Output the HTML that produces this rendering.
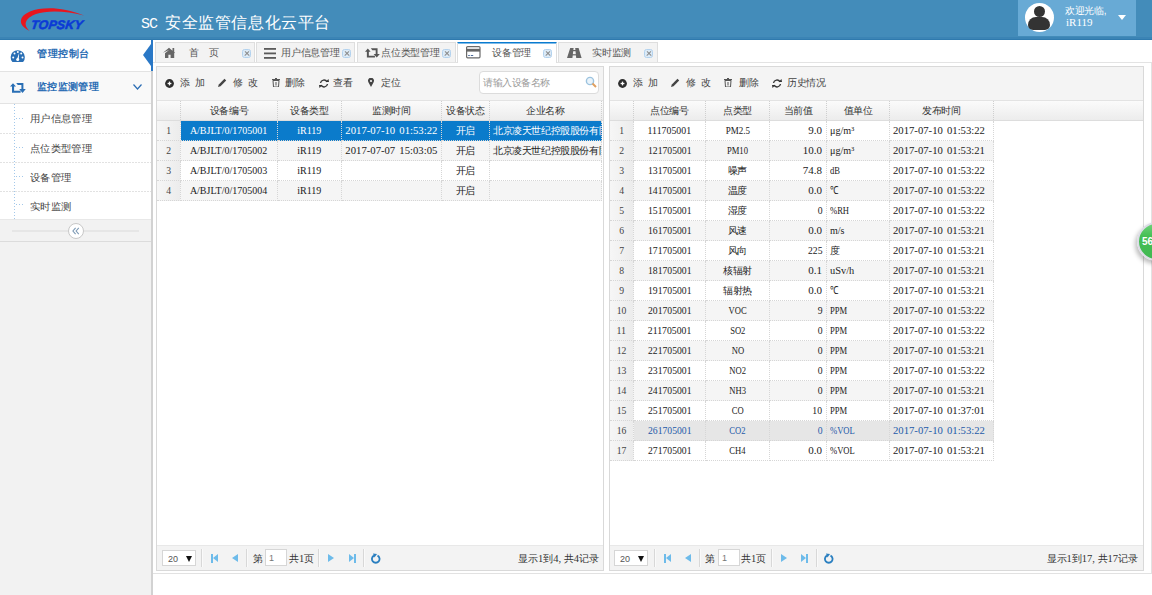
<!DOCTYPE html><html><head><meta charset="utf-8"><style>
*{margin:0;padding:0;box-sizing:border-box}
html,body{width:1152px;height:595px;overflow:hidden;background:#fff;font-family:"Liberation Sans",sans-serif;font-size:10px;color:#333}
.a{position:absolute}
.nw{white-space:nowrap}
#hdr{position:absolute;left:0;top:0;width:1152px;height:40px;background:#438cba;border-bottom:1px solid #2f7aae;box-shadow:inset 0 -2px #3b84b5}
#title{position:absolute;left:141px;top:13px;color:#fff;font-size:16px;line-height:20px;white-space:nowrap}
#user{position:absolute;left:1018px;top:0;width:118px;height:36px;background:#68aad5}
.sub{position:absolute;left:0;width:151px;height:29px;background:#fff linear-gradient(90deg,#e2e2e2 2px,transparent 2px) 0 100%/3px 1px repeat-x}
.sub span{position:absolute;left:30px;top:9px;font-size:10px;transform:scaleX(1.035);transform-origin:0 0;color:#444;line-height:12px;white-space:nowrap}
.tab{position:absolute;top:42px;height:20px;background:#f3f3f3;border:1px solid #dedede;border-bottom:none}
.tab .t{position:absolute;top:4px;font-size:10px;letter-spacing:-0.25px;line-height:12px;color:#555;white-space:nowrap}
.cls{position:absolute;top:6px;width:9px;height:9px;border-radius:2.5px;background:#dcebf8;border:1px solid #b3d2ee}
.cls:before,.cls:after{content:"";position:absolute;left:0.5px;top:3px;width:6px;height:1.4px;background:#8c8c8c;transform:rotate(45deg)}
.cls:after{transform:rotate(-45deg)}
.panel{position:absolute;top:66px;height:505px;border:1px solid #d9d9d9;background:#fff;overflow:hidden}
.tb{position:absolute;left:0;top:0;right:0;height:34px;background:#f4f4f4;border-bottom:1px solid #e3e3e3}
.tbt{position:absolute;top:9.5px;font-size:10px;line-height:12px;color:#444;white-space:nowrap}
.hd{position:absolute;top:34px;height:20px;background:linear-gradient(#fbfbfb,#ececec);border-bottom:1px solid #dddddd}
.hc{position:absolute;top:0;height:19px;line-height:19px;text-align:center;font-size:10px;letter-spacing:-0.45px;color:#333;white-space:nowrap;border-right:1px dotted #cfcfcf}
.rw{position:absolute;height:20px}
.cc{position:absolute;top:0;height:20px;line-height:19px;white-space:nowrap;overflow:hidden;border-right:1px dotted #d6d6d6;border-bottom:1px dotted #d6d6d6;text-align:center}
.rn{background:linear-gradient(90deg,#f6f6f6,#ececec);color:#333}
.n{font-family:"Liberation Serif",serif;font-size:11px;color:#444}
.s{display:inline-block;word-spacing:1.5px}
.z{font-size:10px;letter-spacing:-0.4px;color:#2a2a2a}
.pg{position:absolute;left:0;right:0;top:478px;height:26px;background:#f3f3f3;border-top:1px solid #e8e8e8}
.sep{position:absolute;top:3px;width:2px;height:18px;border-left:1px solid #d8d8d8;border-right:1px solid #fafafa}
.pt{position:absolute;top:7px;font-size:10px;line-height:12px;color:#333;white-space:nowrap}
.pt i{font-style:normal;font-family:"Liberation Serif",serif;font-size:10.5px}
</style></head><body><div id="hdr">
  <svg class="a" style="left:0;top:0" width="100" height="40" viewBox="0 0 100 40">
    <path d="M29.8 31 C 17 25, 19 16, 30 11.5 C 42 7, 62 6.5, 84 15.5 C 66 10.5, 46 10.5, 36 14 C 26 18, 22 24, 29.8 31 Z" fill="#e8161e"/>
    <text x="30.5" y="28.7" font-family="Liberation Sans" font-weight="bold" font-style="italic" font-size="12.4" fill="#0b3ad6" stroke="#0b3ad6" stroke-width="0.55" letter-spacing="0.2" transform="translate(30.5 28.7) skewX(-8) translate(-30.5 -28.7)">TOPSKY</text>
  </svg>
  <div id="title"><span style="font-family:'Liberation Mono',monospace;font-size:15px;letter-spacing:-1px">SC </span><span style="letter-spacing:0.6px">安全监管信息化云平台</span></div>
  <div id="user">
    <div class="a" style="left:7px;top:3px;width:29px;height:29px;border-radius:50%;background:#fff"></div>
    <div class="a" style="left:16px;top:6px;width:11px;height:11px;border-radius:50%;background:#333"></div>
    <div class="a" style="left:10px;top:17px;width:22px;height:13px;border-radius:11px 11px 7px 7px;background:#333"></div>
    <div class="a nw" style="left:47px;top:5px;color:#fff;font-size:10px;letter-spacing:-0.3px;line-height:11px">欢迎光临,</div>
    <div class="a nw" style="left:48px;top:17px;color:#fff;font-size:11px;line-height:11px;font-family:'Liberation Serif',serif">iR119</div>
    <div class="a" style="left:100px;top:15px;width:0;height:0;border-left:4px solid transparent;border-right:4px solid transparent;border-top:5px solid #fff"></div>
  </div>
</div>
<div class="a" style="left:0;top:40px;width:151px;height:555px;background:#f2f2f2">
  <div class="a" style="left:0;top:0;width:151px;height:32px;background:#fff;border-bottom:1px solid #e3e3e3">
    <svg class="a" style="left:6px;top:0" width="24" height="30" viewBox="6 40 24 30"><path d="M12.4 61.9 A7.1 7.1 0 1 1 23.1 61.9 Z" fill="#2a6fb5"/><circle cx="13.2" cy="57.6" r="1" fill="#fff"/><circle cx="14.5" cy="53.6" r="1" fill="#fff"/><circle cx="17.8" cy="52.1" r="1" fill="#fff"/><circle cx="21.2" cy="53.6" r="1" fill="#fff"/><circle cx="22.5" cy="57.6" r="1" fill="#fff"/><path d="M16.9 59.6 L19.2 52.8 L18.7 59.9 Z" fill="#fff"/><circle cx="17.7" cy="59.6" r="1.5" fill="#fff"/></svg>
    <div class="a nw" style="left:37px;top:8px;font-size:10px;letter-spacing:0.5px;line-height:12px;font-weight:bold;color:#2b6db4">管理控制台</div>
  </div>
  <div class="a" style="left:0;top:32px;width:151px;height:32px;background:#f9f9f9;border-bottom:1px solid #e3e3e3">
    <svg class="a" style="left:6px;top:0" width="24" height="30" viewBox="6 72 24 30"><path d="M10 86.6 L13 83.2 L16 86.6 L14.1 86.6 L14.1 90.8 L20.6 90.8 L20.6 92.8 L12 92.8 L12 86.6 Z M16.2 83 L23.4 83 L23.4 89 L25.8 89 L22.5 92.9 L19.2 89 L21.4 89 L21.4 85 L17.8 85 Z" fill="#2a6fb5"/></svg>
    <div class="a nw" style="left:37px;top:9px;font-size:10px;letter-spacing:0.35px;line-height:12px;font-weight:bold;color:#2b6db4">监控监测管理</div>
    <svg class="a" style="left:133px;top:12px" width="9" height="6" viewBox="0 0 9 6"><path d="M0.5 0.5 L4.5 5 L8.5 0.5" stroke="#2b6db4" stroke-width="1.2" fill="none"/></svg>
  </div>
  <div class="sub" style="top:64px;height:30px"><span>用户信息管理</span></div>
  <div class="sub" style="top:94px"><span>点位类型管理</span></div>
  <div class="sub" style="top:123px"><span>设备管理</span></div>
  <div class="sub" style="top:152px;height:27px;background:#fff"><span>实时监测</span></div>
  <div class="a" style="left:14px;top:64px;width:1px;height:115px;background:repeating-linear-gradient(#a3c8ea 0 1px,transparent 1px 3px)"></div>
  <div class="a" style="left:16px;top:78px;width:7px;height:1px;background:repeating-linear-gradient(90deg,#a3c8ea 0 1px,transparent 1px 3px)"></div>
  <div class="a" style="left:16px;top:107px;width:7px;height:1px;background:repeating-linear-gradient(90deg,#a3c8ea 0 1px,transparent 1px 3px)"></div>
  <div class="a" style="left:16px;top:136px;width:7px;height:1px;background:repeating-linear-gradient(90deg,#a3c8ea 0 1px,transparent 1px 3px)"></div>
  <div class="a" style="left:16px;top:164px;width:7px;height:1px;background:repeating-linear-gradient(90deg,#a3c8ea 0 1px,transparent 1px 3px)"></div>
  <div class="a" style="left:0;top:179px;width:151px;height:23px;background:#f2f2f2;border-top:1px solid #e8e8e8;border-bottom:1px solid #dcdcdc"></div>
  <div class="a" style="left:12px;top:190px;width:127px;height:2px;background:#e6e6e6"></div>
  <div class="a" style="left:68px;top:183px;width:16px;height:16px;border-radius:50%;background:#fff;border:1px solid #c8c8c8"></div><svg class="a" style="left:72px;top:187px" width="8" height="8" viewBox="0 0 8 8"><path d="M3.6 0.8 L0.9 4 L3.6 7.2 M6.8 0.8 L4.1 4 L6.8 7.2" stroke="#7e9ab5" stroke-width="1.1" fill="none"/></svg>
</div>
<div class="a" style="left:151px;top:40px;width:2px;height:555px;background:#d2d2d2"></div>
<div class="a" style="left:151px;top:40px;width:2px;height:31px;background:#2a78c6"></div>
<div class="a" style="left:143px;top:44px;width:0;height:0;border-top:11px solid transparent;border-bottom:11px solid transparent;border-right:8px solid #2a78c6"></div>

<div class="a" style="left:153px;top:62px;width:999px;height:1px;background:#e3e3e3"></div>
<div class="tab" style="left:155px;width:100px">
  <svg class="a" style="left:-156px;top:-43px" width="200" height="80" viewBox="0 0 200 80"><path d="M163 52.8 L169 47.8 L172.5 50.7 L172.5 48 L174.2 48 L174.2 52.1 L175 52.8 L174.2 53.2 L174.2 57.9 L170.6 57.9 L170.6 54.8 L168.4 54.8 L168.4 57.9 L165 57.9 L165 53.3 L169 49.9 Z" fill="#666"/></svg>
  <div class="t" style="left:33px;letter-spacing:10px">首页</div><div class="cls" style="left:86px"></div></div>
<div class="tab" style="left:256px;width:99px">
  <svg class="a" style="left:7px;top:5px" width="12" height="11" viewBox="0 0 12 11"><rect x="0" y="0" width="12" height="1.8" fill="#5a5a5a"/><rect x="0" y="4.5" width="12" height="1.8" fill="#5a5a5a"/><rect x="0" y="9" width="12" height="1.8" fill="#5a5a5a"/></svg>
  <div class="t" style="left:24px">用户信息管理</div><div class="cls" style="left:85px"></div></div>
<div class="tab" style="left:357px;width:99px">
  <svg class="a" style="left:7px;top:5px" width="15" height="10" viewBox="10 83 16 10"><path d="M10 86.6 L13 83.2 L16 86.6 L14.1 86.6 L14.1 90.8 L20.6 90.8 L20.6 92.8 L12 92.8 L12 86.6 Z M16.2 83 L23.4 83 L23.4 89 L25.8 89 L22.5 92.9 L19.2 89 L21.4 89 L21.4 85 L17.8 85 Z" fill="#555"/></svg>
  <div class="t" style="left:23px">点位类型管理</div><div class="cls" style="left:84px"></div></div>
<div class="tab" style="left:457px;width:100px;height:21px;background:#fff;border-top:1px solid #0a7bcf;box-shadow:inset 0 1px #7fbbe8">
  <svg class="a" style="left:7px;top:3px" width="16" height="13" viewBox="0 0 16 13"><rect x="1.6" y="0.6" width="13.4" height="11.2" rx="1" fill="none" stroke="#6a6a6a" stroke-width="1.2"/><rect x="1.6" y="2.8" width="13.4" height="2.8" fill="#666"/><rect x="3.2" y="9" width="1.6" height="1" fill="#4a6a9a"/><rect x="5.8" y="9" width="2.4" height="1" fill="#4a6a9a"/></svg>
  <div class="t" style="left:34px;top:4px">设备管理</div><div class="cls" style="left:85px;top:6px"></div></div>
<div class="tab" style="left:558px;width:100px">
  <svg class="a" style="left:8px;top:5px" width="15" height="10" viewBox="0 0 15 10"><path d="M3.2 0 L6.6 0 L5.4 10 L0 10Z M8.2 0 L11.6 0 L14.6 10 L9.2 10Z" fill="#666"/><rect x="5" y="2" width="4" height="1.2" fill="#666"/><rect x="5" y="6.2" width="4.4" height="1.2" fill="#666"/></svg>
  <div class="t" style="left:33px">实时监测</div><div class="cls" style="left:85px"></div></div>
<div class="panel" style="left:156px;width:448px">
<div class="tb">
<svg class="a" style="left:8px;top:12px" width="9" height="9" viewBox="0 0 9 9"><circle cx="4.5" cy="4.5" r="4.4" fill="#2e2e2e"/><rect x="2.6" y="3.85" width="3.8" height="1.3" fill="#fff"/><rect x="3.85" y="2.6" width="1.3" height="3.8" fill="#fff"/></svg>
<span class="tbt" style="left:23px;letter-spacing:5px">添加</span>
<svg class="a" style="left:61px;top:11px" width="9" height="9" viewBox="0 0 9 9"><path d="M0 9 L0.8 6.5 L6.5 0.8 L8.2 2.5 L2.5 8.2Z" fill="#444"/></svg>
<span class="tbt" style="left:76px;letter-spacing:5px">修改</span>
<svg class="a" style="left:115px;top:11px" width="8" height="9" viewBox="0 0 8 9"><rect x="0" y="1" width="8" height="1.2" fill="#555"/><rect x="3" y="0" width="2" height="1" fill="#555"/><path d="M1 2.5 L7 2.5 L6.5 9 L1.5 9Z" fill="none" stroke="#555" stroke-width="1"/><rect x="3.5" y="4" width="1" height="3.5" fill="#555"/></svg>
<span class="tbt" style="left:128px">删除</span>
<svg class="a" style="left:162px;top:12px" width="10" height="9" viewBox="0 0 10 9"><path d="M1.5 4 A3.5 3.5 0 0 1 8 2.8" stroke="#333" stroke-width="1.35" fill="none"/><path d="M8.5 5 A3.5 3.5 0 0 1 2 6.2" stroke="#333" stroke-width="1.35" fill="none"/><path d="M6.5 3 L10 3 L9.5 0Z" fill="#333"/><path d="M3.5 6 L0 6 L0.5 9Z" fill="#333"/></svg>
<span class="tbt" style="left:176px">查看</span>
<svg class="a" style="left:211px;top:11px" width="6" height="9" viewBox="0 0 6 9"><path d="M3 9 L0.4 4.2 A3 3 0 1 1 5.6 4.2Z" fill="#444"/><circle cx="3" cy="3" r="1.1" fill="#f4f4f4"/></svg>
<span class="tbt" style="left:224px">定位</span>
<div class="a" style="left:322px;top:4px;width:120px;height:23px;background:#fff;border:1px solid #dcdcdc;border-radius:4px"><span class="a nw" style="left:3px;top:5px;font-size:10px;letter-spacing:-0.45px;line-height:12px;color:#9a9a9a">请输入设备名称</span><svg class="a" style="left:105px;top:4px" width="12" height="12" viewBox="0 0 12 12"><circle cx="5" cy="5" r="3.6" fill="#eaf4fb" stroke="#9cc3df" stroke-width="1.4"/><path d="M7.5 7.5 L11 11" stroke="#e0a060" stroke-width="2"/></svg></div>
</div>
<div class="hd" style="left:0;width:446px"><div class="hc" style="left:0px;width:24px"></div><div class="hc" style="left:24px;width:97px">设备编号</div><div class="hc" style="left:121px;width:64px">设备类型</div><div class="hc" style="left:185px;width:100px">监测时间</div><div class="hc" style="left:285px;width:48px">设备状态</div><div class="hc" style="left:333px;width:112px">企业名称</div></div><div class="rw" style="left:0;top:54px;width:445px;background:#0b7bcb"><div class="cc rn n" style="left:0px;width:24px;text-align:center"><span class="s" style="transform:scaleX(0.880);transform-origin:50% 0">1</span></div><div class="cc n" style="left:24px;width:97px;text-align:center;color:#fff"><span class="s" style="transform:scaleX(0.909);transform-origin:50% 0">A/BJLT/0/1705001</span></div><div class="cc n" style="left:121px;width:64px;text-align:center;color:#fff"><span class="s" style="transform:scaleX(0.914);transform-origin:50% 0">iR119</span></div><div class="cc n" style="left:185px;width:100px;text-align:center;color:#fff"><span class="s" style="transform:scaleX(0.971);transform-origin:50% 0">2017-07-10 01:53:22</span></div><div class="cc z" style="left:285px;width:48px;text-align:center;color:#fff">开启</div><div class="cc z" style="left:333px;width:112px;text-align:left;color:#fff;padding-left:3px">北京凌天世纪控股股份有限公司</div></div><div class="rw" style="left:0;top:74px;width:445px;background:#f5f5f5"><div class="cc rn n" style="left:0px;width:24px;text-align:center"><span class="s" style="transform:scaleX(0.880);transform-origin:50% 0">2</span></div><div class="cc n" style="left:24px;width:97px;text-align:center;color:#222"><span class="s" style="transform:scaleX(0.909);transform-origin:50% 0">A/BJLT/0/1705002</span></div><div class="cc n" style="left:121px;width:64px;text-align:center;color:#222"><span class="s" style="transform:scaleX(0.914);transform-origin:50% 0">iR119</span></div><div class="cc n" style="left:185px;width:100px;text-align:center;color:#222"><span class="s" style="transform:scaleX(0.971);transform-origin:50% 0">2017-07-07 15:03:05</span></div><div class="cc z" style="left:285px;width:48px;text-align:center;color:#222">开启</div><div class="cc z" style="left:333px;width:112px;text-align:left;color:#222;padding-left:3px">北京凌天世纪控股股份有限公司</div></div><div class="rw" style="left:0;top:94px;width:445px;background:#fff"><div class="cc rn n" style="left:0px;width:24px;text-align:center"><span class="s" style="transform:scaleX(0.880);transform-origin:50% 0">3</span></div><div class="cc n" style="left:24px;width:97px;text-align:center;color:#222"><span class="s" style="transform:scaleX(0.909);transform-origin:50% 0">A/BJLT/0/1705003</span></div><div class="cc n" style="left:121px;width:64px;text-align:center;color:#222"><span class="s" style="transform:scaleX(0.914);transform-origin:50% 0">iR119</span></div><div class="cc n" style="left:185px;width:100px;text-align:center;color:#222"></div><div class="cc z" style="left:285px;width:48px;text-align:center;color:#222">开启</div><div class="cc z" style="left:333px;width:112px;text-align:left;color:#222;padding-left:3px"></div></div><div class="rw" style="left:0;top:114px;width:445px;background:#f5f5f5"><div class="cc rn n" style="left:0px;width:24px;text-align:center"><span class="s" style="transform:scaleX(0.880);transform-origin:50% 0">4</span></div><div class="cc n" style="left:24px;width:97px;text-align:center;color:#222"><span class="s" style="transform:scaleX(0.909);transform-origin:50% 0">A/BJLT/0/1705004</span></div><div class="cc n" style="left:121px;width:64px;text-align:center;color:#222"><span class="s" style="transform:scaleX(0.914);transform-origin:50% 0">iR119</span></div><div class="cc n" style="left:185px;width:100px;text-align:center;color:#222"></div><div class="cc z" style="left:285px;width:48px;text-align:center;color:#222">开启</div><div class="cc z" style="left:333px;width:112px;text-align:left;color:#222;padding-left:3px"></div></div>
<div class="pg"><div class="a" style="left:5px;top:4px;width:34px;height:16px;background:#fff;border:1px solid #d6d6d6"><span class="a" style="left:5px;top:2px;font-size:9px;line-height:12px;color:#555">20</span><span class="a" style="left:23px;top:5px;width:0;height:0;border-left:3px solid transparent;border-right:3px solid transparent;border-top:6px solid #111"></span></div><div class="sep" style="left:44px"></div><div class="sep" style="left:89px"></div><div class="sep" style="left:161px"></div><div class="sep" style="left:206px"></div><div class="a" style="left:54px;top:8px;width:2px;height:9px;background:#6dbbea"></div><div class="a" style="left:56px;top:8px;width:0;height:0;border-top:4.5px solid transparent;border-bottom:4.5px solid transparent;border-right:5px solid #6dbbea"></div><div class="a" style="left:75px;top:8px;width:0;height:0;border-top:4.5px solid transparent;border-bottom:4.5px solid transparent;border-right:6px solid #6dbbea"></div><span class="pt" style="left:96px">第</span><div class="a" style="left:108px;top:3px;width:22px;height:17px;background:#fff;border:1px solid #d6d6d6"><span class="a" style="left:3px;top:2px;font-size:9px;line-height:12px;color:#777">1</span></div><span class="pt" style="left:132px">共<i>1</i>页</span><div class="a" style="left:171px;top:8px;width:0;height:0;border-top:4.5px solid transparent;border-bottom:4.5px solid transparent;border-left:6px solid #6dbbea"></div><div class="a" style="left:192px;top:8px;width:0;height:0;border-top:4.5px solid transparent;border-bottom:4.5px solid transparent;border-left:5px solid #6dbbea"></div><div class="a" style="left:197px;top:8px;width:2px;height:9px;background:#6dbbea"></div><svg class="a" style="left:214px;top:7px" width="10" height="11" viewBox="0 0 10 11"><path d="M6.5 2.6 A3.8 3.8 0 1 1 3 2.6" stroke="#2a7fc0" stroke-width="1.8" fill="none"/><path d="M2 0.5 L6 1 L3.5 4.5Z" fill="#2a7fc0"/></svg><span class="pt" style="right:4px">显示<i>1</i>到<i>4, </i>共<i>4</i>记录</span></div>
</div>
<div class="panel" style="left:609px;width:535px">
<div class="tb">
<svg class="a" style="left:8px;top:12px" width="9" height="9" viewBox="0 0 9 9"><circle cx="4.5" cy="4.5" r="4.4" fill="#2e2e2e"/><rect x="2.6" y="3.85" width="3.8" height="1.3" fill="#fff"/><rect x="3.85" y="2.6" width="1.3" height="3.8" fill="#fff"/></svg>
<span class="tbt" style="left:23px;letter-spacing:5px">添加</span>
<svg class="a" style="left:61px;top:11px" width="9" height="9" viewBox="0 0 9 9"><path d="M0 9 L0.8 6.5 L6.5 0.8 L8.2 2.5 L2.5 8.2Z" fill="#444"/></svg>
<span class="tbt" style="left:76px;letter-spacing:5px">修改</span>
<svg class="a" style="left:114px;top:11px" width="8" height="9" viewBox="0 0 8 9"><rect x="0" y="1" width="8" height="1.2" fill="#555"/><rect x="3" y="0" width="2" height="1" fill="#555"/><path d="M1 2.5 L7 2.5 L6.5 9 L1.5 9Z" fill="none" stroke="#555" stroke-width="1"/><rect x="3.5" y="4" width="1" height="3.5" fill="#555"/></svg>
<span class="tbt" style="left:129px">删除</span>
<svg class="a" style="left:162px;top:12px" width="10" height="9" viewBox="0 0 10 9"><path d="M1.5 4 A3.5 3.5 0 0 1 8 2.8" stroke="#333" stroke-width="1.35" fill="none"/><path d="M8.5 5 A3.5 3.5 0 0 1 2 6.2" stroke="#333" stroke-width="1.35" fill="none"/><path d="M6.5 3 L10 3 L9.5 0Z" fill="#333"/><path d="M3.5 6 L0 6 L0.5 9Z" fill="#333"/></svg>
<span class="tbt" style="left:177px;letter-spacing:-0.3px">历史情况</span>
</div>
<div class="hd" style="left:0;width:533px"></div>
<div class="hd" style="left:0;width:533px"><div class="hc" style="left:0px;width:24px"></div><div class="hc" style="left:24px;width:72px">点位编号</div><div class="hc" style="left:96px;width:64px">点类型</div><div class="hc" style="left:160px;width:57px">当前值</div><div class="hc" style="left:217px;width:63px">值单位</div><div class="hc" style="left:280px;width:104px">发布时间</div></div><div class="rw" style="left:0;top:54px;width:384px;background:#fff"><div class="cc rn n" style="left:0px;width:24px;text-align:center"><span class="s" style="transform:scaleX(0.880);transform-origin:50% 0">1</span></div><div class="cc n" style="left:24px;width:72px;text-align:center;color:#222"><span class="s" style="transform:scaleX(0.895);transform-origin:50% 0">111705001</span></div><div class="cc n" style="left:96px;width:64px;text-align:center;color:#222"><span class="s" style="transform:scaleX(0.816);transform-origin:50% 0">PM2.5</span></div><div class="cc n" style="left:160px;width:57px;text-align:right;color:#222;padding-right:4px"><span class="s" style="transform:scaleX(1.000);transform-origin:100% 0">9.0</span></div><div class="cc n" style="left:217px;width:63px;text-align:left;color:#222;padding-left:3px"><span class="s" style="transform:scaleX(0.920);transform-origin:0 0">μg/m³</span></div><div class="cc n" style="left:280px;width:104px;text-align:left;color:#222;padding-left:3px"><span class="s" style="transform:scaleX(0.971);transform-origin:0 0">2017-07-10 01:53:22</span></div></div><div class="rw" style="left:0;top:74px;width:384px;background:#f5f5f5"><div class="cc rn n" style="left:0px;width:24px;text-align:center"><span class="s" style="transform:scaleX(0.880);transform-origin:50% 0">2</span></div><div class="cc n" style="left:24px;width:72px;text-align:center;color:#222"><span class="s" style="transform:scaleX(0.880);transform-origin:50% 0">121705001</span></div><div class="cc n" style="left:96px;width:64px;text-align:center;color:#222"><span class="s" style="transform:scaleX(0.780);transform-origin:50% 0">PM10</span></div><div class="cc n" style="left:160px;width:57px;text-align:right;color:#222;padding-right:4px"><span class="s" style="transform:scaleX(1.000);transform-origin:100% 0">10.0</span></div><div class="cc n" style="left:217px;width:63px;text-align:left;color:#222;padding-left:3px"><span class="s" style="transform:scaleX(0.920);transform-origin:0 0">μg/m³</span></div><div class="cc n" style="left:280px;width:104px;text-align:left;color:#222;padding-left:3px"><span class="s" style="transform:scaleX(0.971);transform-origin:0 0">2017-07-10 01:53:21</span></div></div><div class="rw" style="left:0;top:94px;width:384px;background:#fff"><div class="cc rn n" style="left:0px;width:24px;text-align:center"><span class="s" style="transform:scaleX(0.880);transform-origin:50% 0">3</span></div><div class="cc n" style="left:24px;width:72px;text-align:center;color:#222"><span class="s" style="transform:scaleX(0.880);transform-origin:50% 0">131705001</span></div><div class="cc z" style="left:96px;width:64px;text-align:center;color:#222">噪声</div><div class="cc n" style="left:160px;width:57px;text-align:right;color:#222;padding-right:4px"><span class="s" style="transform:scaleX(1.000);transform-origin:100% 0">74.8</span></div><div class="cc n" style="left:217px;width:63px;text-align:left;color:#222;padding-left:3px"><span class="s" style="transform:scaleX(0.780);transform-origin:0 0">dB</span></div><div class="cc n" style="left:280px;width:104px;text-align:left;color:#222;padding-left:3px"><span class="s" style="transform:scaleX(0.971);transform-origin:0 0">2017-07-10 01:53:22</span></div></div><div class="rw" style="left:0;top:114px;width:384px;background:#f5f5f5"><div class="cc rn n" style="left:0px;width:24px;text-align:center"><span class="s" style="transform:scaleX(0.880);transform-origin:50% 0">4</span></div><div class="cc n" style="left:24px;width:72px;text-align:center;color:#222"><span class="s" style="transform:scaleX(0.880);transform-origin:50% 0">141705001</span></div><div class="cc z" style="left:96px;width:64px;text-align:center;color:#222">温度</div><div class="cc n" style="left:160px;width:57px;text-align:right;color:#222;padding-right:4px"><span class="s" style="transform:scaleX(1.000);transform-origin:100% 0">0.0</span></div><div class="cc n" style="left:217px;width:63px;text-align:left;color:#222;padding-left:3px"><span class="s" style="transform:scaleX(0.780);transform-origin:0 0">℃</span></div><div class="cc n" style="left:280px;width:104px;text-align:left;color:#222;padding-left:3px"><span class="s" style="transform:scaleX(0.971);transform-origin:0 0">2017-07-10 01:53:22</span></div></div><div class="rw" style="left:0;top:134px;width:384px;background:#fff"><div class="cc rn n" style="left:0px;width:24px;text-align:center"><span class="s" style="transform:scaleX(0.880);transform-origin:50% 0">5</span></div><div class="cc n" style="left:24px;width:72px;text-align:center;color:#222"><span class="s" style="transform:scaleX(0.880);transform-origin:50% 0">151705001</span></div><div class="cc z" style="left:96px;width:64px;text-align:center;color:#222">湿度</div><div class="cc n" style="left:160px;width:57px;text-align:right;color:#222;padding-right:4px"><span class="s" style="transform:scaleX(0.880);transform-origin:100% 0">0</span></div><div class="cc n" style="left:217px;width:63px;text-align:left;color:#222;padding-left:3px"><span class="s" style="transform:scaleX(0.780);transform-origin:0 0">%RH</span></div><div class="cc n" style="left:280px;width:104px;text-align:left;color:#222;padding-left:3px"><span class="s" style="transform:scaleX(0.971);transform-origin:0 0">2017-07-10 01:53:22</span></div></div><div class="rw" style="left:0;top:154px;width:384px;background:#f5f5f5"><div class="cc rn n" style="left:0px;width:24px;text-align:center"><span class="s" style="transform:scaleX(0.880);transform-origin:50% 0">6</span></div><div class="cc n" style="left:24px;width:72px;text-align:center;color:#222"><span class="s" style="transform:scaleX(0.880);transform-origin:50% 0">161705001</span></div><div class="cc z" style="left:96px;width:64px;text-align:center;color:#222">风速</div><div class="cc n" style="left:160px;width:57px;text-align:right;color:#222;padding-right:4px"><span class="s" style="transform:scaleX(1.000);transform-origin:100% 0">0.0</span></div><div class="cc n" style="left:217px;width:63px;text-align:left;color:#222;padding-left:3px"><span class="s" style="transform:scaleX(0.914);transform-origin:0 0">m/s</span></div><div class="cc n" style="left:280px;width:104px;text-align:left;color:#222;padding-left:3px"><span class="s" style="transform:scaleX(0.971);transform-origin:0 0">2017-07-10 01:53:21</span></div></div><div class="rw" style="left:0;top:174px;width:384px;background:#fff"><div class="cc rn n" style="left:0px;width:24px;text-align:center"><span class="s" style="transform:scaleX(0.880);transform-origin:50% 0">7</span></div><div class="cc n" style="left:24px;width:72px;text-align:center;color:#222"><span class="s" style="transform:scaleX(0.880);transform-origin:50% 0">171705001</span></div><div class="cc z" style="left:96px;width:64px;text-align:center;color:#222">风向</div><div class="cc n" style="left:160px;width:57px;text-align:right;color:#222;padding-right:4px"><span class="s" style="transform:scaleX(0.880);transform-origin:100% 0">225</span></div><div class="cc z" style="left:217px;width:63px;text-align:left;color:#222;padding-left:3px">度</div><div class="cc n" style="left:280px;width:104px;text-align:left;color:#222;padding-left:3px"><span class="s" style="transform:scaleX(0.971);transform-origin:0 0">2017-07-10 01:53:21</span></div></div><div class="rw" style="left:0;top:194px;width:384px;background:#f5f5f5"><div class="cc rn n" style="left:0px;width:24px;text-align:center"><span class="s" style="transform:scaleX(0.880);transform-origin:50% 0">8</span></div><div class="cc n" style="left:24px;width:72px;text-align:center;color:#222"><span class="s" style="transform:scaleX(0.880);transform-origin:50% 0">181705001</span></div><div class="cc z" style="left:96px;width:64px;text-align:center;color:#222">核辐射</div><div class="cc n" style="left:160px;width:57px;text-align:right;color:#222;padding-right:4px"><span class="s" style="transform:scaleX(1.000);transform-origin:100% 0">0.1</span></div><div class="cc n" style="left:217px;width:63px;text-align:left;color:#222;padding-left:3px"><span class="s" style="transform:scaleX(0.943);transform-origin:0 0">uSv/h</span></div><div class="cc n" style="left:280px;width:104px;text-align:left;color:#222;padding-left:3px"><span class="s" style="transform:scaleX(0.971);transform-origin:0 0">2017-07-10 01:53:21</span></div></div><div class="rw" style="left:0;top:214px;width:384px;background:#fff"><div class="cc rn n" style="left:0px;width:24px;text-align:center"><span class="s" style="transform:scaleX(0.880);transform-origin:50% 0">9</span></div><div class="cc n" style="left:24px;width:72px;text-align:center;color:#222"><span class="s" style="transform:scaleX(0.880);transform-origin:50% 0">191705001</span></div><div class="cc z" style="left:96px;width:64px;text-align:center;color:#222">辐射热</div><div class="cc n" style="left:160px;width:57px;text-align:right;color:#222;padding-right:4px"><span class="s" style="transform:scaleX(1.000);transform-origin:100% 0">0.0</span></div><div class="cc n" style="left:217px;width:63px;text-align:left;color:#222;padding-left:3px"><span class="s" style="transform:scaleX(0.780);transform-origin:0 0">℃</span></div><div class="cc n" style="left:280px;width:104px;text-align:left;color:#222;padding-left:3px"><span class="s" style="transform:scaleX(0.971);transform-origin:0 0">2017-07-10 01:53:21</span></div></div><div class="rw" style="left:0;top:234px;width:384px;background:#f5f5f5"><div class="cc rn n" style="left:0px;width:24px;text-align:center"><span class="s" style="transform:scaleX(0.880);transform-origin:50% 0">10</span></div><div class="cc n" style="left:24px;width:72px;text-align:center;color:#222"><span class="s" style="transform:scaleX(0.880);transform-origin:50% 0">201705001</span></div><div class="cc n" style="left:96px;width:64px;text-align:center;color:#222"><span class="s" style="transform:scaleX(0.780);transform-origin:50% 0">VOC</span></div><div class="cc n" style="left:160px;width:57px;text-align:right;color:#222;padding-right:4px"><span class="s" style="transform:scaleX(0.880);transform-origin:100% 0">9</span></div><div class="cc n" style="left:217px;width:63px;text-align:left;color:#222;padding-left:3px"><span class="s" style="transform:scaleX(0.780);transform-origin:0 0">PPM</span></div><div class="cc n" style="left:280px;width:104px;text-align:left;color:#222;padding-left:3px"><span class="s" style="transform:scaleX(0.971);transform-origin:0 0">2017-07-10 01:53:22</span></div></div><div class="rw" style="left:0;top:254px;width:384px;background:#fff"><div class="cc rn n" style="left:0px;width:24px;text-align:center"><span class="s" style="transform:scaleX(0.914);transform-origin:50% 0">11</span></div><div class="cc n" style="left:24px;width:72px;text-align:center;color:#222"><span class="s" style="transform:scaleX(0.887);transform-origin:50% 0">211705001</span></div><div class="cc n" style="left:96px;width:64px;text-align:center;color:#222"><span class="s" style="transform:scaleX(0.780);transform-origin:50% 0">SO2</span></div><div class="cc n" style="left:160px;width:57px;text-align:right;color:#222;padding-right:4px"><span class="s" style="transform:scaleX(0.880);transform-origin:100% 0">0</span></div><div class="cc n" style="left:217px;width:63px;text-align:left;color:#222;padding-left:3px"><span class="s" style="transform:scaleX(0.780);transform-origin:0 0">PPM</span></div><div class="cc n" style="left:280px;width:104px;text-align:left;color:#222;padding-left:3px"><span class="s" style="transform:scaleX(0.971);transform-origin:0 0">2017-07-10 01:53:22</span></div></div><div class="rw" style="left:0;top:274px;width:384px;background:#f5f5f5"><div class="cc rn n" style="left:0px;width:24px;text-align:center"><span class="s" style="transform:scaleX(0.880);transform-origin:50% 0">12</span></div><div class="cc n" style="left:24px;width:72px;text-align:center;color:#222"><span class="s" style="transform:scaleX(0.880);transform-origin:50% 0">221705001</span></div><div class="cc n" style="left:96px;width:64px;text-align:center;color:#222"><span class="s" style="transform:scaleX(0.780);transform-origin:50% 0">NO</span></div><div class="cc n" style="left:160px;width:57px;text-align:right;color:#222;padding-right:4px"><span class="s" style="transform:scaleX(0.880);transform-origin:100% 0">0</span></div><div class="cc n" style="left:217px;width:63px;text-align:left;color:#222;padding-left:3px"><span class="s" style="transform:scaleX(0.780);transform-origin:0 0">PPM</span></div><div class="cc n" style="left:280px;width:104px;text-align:left;color:#222;padding-left:3px"><span class="s" style="transform:scaleX(0.971);transform-origin:0 0">2017-07-10 01:53:21</span></div></div><div class="rw" style="left:0;top:294px;width:384px;background:#fff"><div class="cc rn n" style="left:0px;width:24px;text-align:center"><span class="s" style="transform:scaleX(0.880);transform-origin:50% 0">13</span></div><div class="cc n" style="left:24px;width:72px;text-align:center;color:#222"><span class="s" style="transform:scaleX(0.880);transform-origin:50% 0">231705001</span></div><div class="cc n" style="left:96px;width:64px;text-align:center;color:#222"><span class="s" style="transform:scaleX(0.780);transform-origin:50% 0">NO2</span></div><div class="cc n" style="left:160px;width:57px;text-align:right;color:#222;padding-right:4px"><span class="s" style="transform:scaleX(0.880);transform-origin:100% 0">0</span></div><div class="cc n" style="left:217px;width:63px;text-align:left;color:#222;padding-left:3px"><span class="s" style="transform:scaleX(0.780);transform-origin:0 0">PPM</span></div><div class="cc n" style="left:280px;width:104px;text-align:left;color:#222;padding-left:3px"><span class="s" style="transform:scaleX(0.971);transform-origin:0 0">2017-07-10 01:53:22</span></div></div><div class="rw" style="left:0;top:314px;width:384px;background:#f5f5f5"><div class="cc rn n" style="left:0px;width:24px;text-align:center"><span class="s" style="transform:scaleX(0.880);transform-origin:50% 0">14</span></div><div class="cc n" style="left:24px;width:72px;text-align:center;color:#222"><span class="s" style="transform:scaleX(0.880);transform-origin:50% 0">241705001</span></div><div class="cc n" style="left:96px;width:64px;text-align:center;color:#222"><span class="s" style="transform:scaleX(0.780);transform-origin:50% 0">NH3</span></div><div class="cc n" style="left:160px;width:57px;text-align:right;color:#222;padding-right:4px"><span class="s" style="transform:scaleX(0.880);transform-origin:100% 0">0</span></div><div class="cc n" style="left:217px;width:63px;text-align:left;color:#222;padding-left:3px"><span class="s" style="transform:scaleX(0.780);transform-origin:0 0">PPM</span></div><div class="cc n" style="left:280px;width:104px;text-align:left;color:#222;padding-left:3px"><span class="s" style="transform:scaleX(0.971);transform-origin:0 0">2017-07-10 01:53:21</span></div></div><div class="rw" style="left:0;top:334px;width:384px;background:#fff"><div class="cc rn n" style="left:0px;width:24px;text-align:center"><span class="s" style="transform:scaleX(0.880);transform-origin:50% 0">15</span></div><div class="cc n" style="left:24px;width:72px;text-align:center;color:#222"><span class="s" style="transform:scaleX(0.880);transform-origin:50% 0">251705001</span></div><div class="cc n" style="left:96px;width:64px;text-align:center;color:#222"><span class="s" style="transform:scaleX(0.780);transform-origin:50% 0">CO</span></div><div class="cc n" style="left:160px;width:57px;text-align:right;color:#222;padding-right:4px"><span class="s" style="transform:scaleX(0.880);transform-origin:100% 0">10</span></div><div class="cc n" style="left:217px;width:63px;text-align:left;color:#222;padding-left:3px"><span class="s" style="transform:scaleX(0.780);transform-origin:0 0">PPM</span></div><div class="cc n" style="left:280px;width:104px;text-align:left;color:#222;padding-left:3px"><span class="s" style="transform:scaleX(0.971);transform-origin:0 0">2017-07-10 01:37:01</span></div></div><div class="rw" style="left:0;top:354px;width:384px;background:#e6e6e6"><div class="cc rn n" style="left:0px;width:24px;text-align:center"><span class="s" style="transform:scaleX(0.880);transform-origin:50% 0">16</span></div><div class="cc n" style="left:24px;width:72px;text-align:center;color:#1e5aa8"><span class="s" style="transform:scaleX(0.880);transform-origin:50% 0">261705001</span></div><div class="cc n" style="left:96px;width:64px;text-align:center;color:#1e5aa8"><span class="s" style="transform:scaleX(0.780);transform-origin:50% 0">CO2</span></div><div class="cc n" style="left:160px;width:57px;text-align:right;color:#1e5aa8;padding-right:4px"><span class="s" style="transform:scaleX(0.880);transform-origin:100% 0">0</span></div><div class="cc n" style="left:217px;width:63px;text-align:left;color:#1e5aa8;padding-left:3px"><span class="s" style="transform:scaleX(0.780);transform-origin:0 0">%VOL</span></div><div class="cc n" style="left:280px;width:104px;text-align:left;color:#1e5aa8;padding-left:3px"><span class="s" style="transform:scaleX(0.971);transform-origin:0 0">2017-07-10 01:53:22</span></div></div><div class="rw" style="left:0;top:374px;width:384px;background:#fff"><div class="cc rn n" style="left:0px;width:24px;text-align:center"><span class="s" style="transform:scaleX(0.880);transform-origin:50% 0">17</span></div><div class="cc n" style="left:24px;width:72px;text-align:center;color:#222"><span class="s" style="transform:scaleX(0.880);transform-origin:50% 0">271705001</span></div><div class="cc n" style="left:96px;width:64px;text-align:center;color:#222"><span class="s" style="transform:scaleX(0.780);transform-origin:50% 0">CH4</span></div><div class="cc n" style="left:160px;width:57px;text-align:right;color:#222;padding-right:4px"><span class="s" style="transform:scaleX(1.000);transform-origin:100% 0">0.0</span></div><div class="cc n" style="left:217px;width:63px;text-align:left;color:#222;padding-left:3px"><span class="s" style="transform:scaleX(0.780);transform-origin:0 0">%VOL</span></div><div class="cc n" style="left:280px;width:104px;text-align:left;color:#222;padding-left:3px"><span class="s" style="transform:scaleX(0.971);transform-origin:0 0">2017-07-10 01:53:21</span></div></div>
<div class="pg"><div class="a" style="left:4px;top:4px;width:34px;height:16px;background:#fff;border:1px solid #d6d6d6"><span class="a" style="left:5px;top:2px;font-size:9px;line-height:12px;color:#555">20</span><span class="a" style="left:23px;top:5px;width:0;height:0;border-left:3px solid transparent;border-right:3px solid transparent;border-top:6px solid #111"></span></div><div class="sep" style="left:44px"></div><div class="sep" style="left:89px"></div><div class="sep" style="left:161px"></div><div class="sep" style="left:206px"></div><div class="a" style="left:54px;top:8px;width:2px;height:9px;background:#6dbbea"></div><div class="a" style="left:56px;top:8px;width:0;height:0;border-top:4.5px solid transparent;border-bottom:4.5px solid transparent;border-right:5px solid #6dbbea"></div><div class="a" style="left:75px;top:8px;width:0;height:0;border-top:4.5px solid transparent;border-bottom:4.5px solid transparent;border-right:6px solid #6dbbea"></div><span class="pt" style="left:95px">第</span><div class="a" style="left:108px;top:3px;width:22px;height:17px;background:#fff;border:1px solid #d6d6d6"><span class="a" style="left:3px;top:2px;font-size:9px;line-height:12px;color:#777">1</span></div><span class="pt" style="left:131px">共<i>1</i>页</span><div class="a" style="left:171px;top:8px;width:0;height:0;border-top:4.5px solid transparent;border-bottom:4.5px solid transparent;border-left:6px solid #6dbbea"></div><div class="a" style="left:191px;top:8px;width:0;height:0;border-top:4.5px solid transparent;border-bottom:4.5px solid transparent;border-left:5px solid #6dbbea"></div><div class="a" style="left:196px;top:8px;width:2px;height:9px;background:#6dbbea"></div><svg class="a" style="left:214px;top:7px" width="10" height="11" viewBox="0 0 10 11"><path d="M6.5 2.6 A3.8 3.8 0 1 1 3 2.6" stroke="#2a7fc0" stroke-width="1.8" fill="none"/><path d="M2 0.5 L6 1 L3.5 4.5Z" fill="#2a7fc0"/></svg><span class="pt" style="right:5px">显示<i>1</i>到<i>17, </i>共<i>17</i>记录</span></div>
</div>
<div class="a" style="left:153px;top:573px;width:999px;height:1px;background:#e2e2e2"></div><div class="a" style="left:1151px;top:62px;width:1px;height:512px;background:#e2e2e2"></div>
<div class="a" style="left:1137px;top:222px;width:39px;height:39px;border-radius:50%;background:linear-gradient(#6fd27a,#45bf55 35%,#42b852);border:2px solid #dcdce6;box-shadow:-2px 3px 4px rgba(0,0,0,0.25)"><span class="a" style="left:3px;top:12px;color:#fff;font-weight:bold;font-size:10px;line-height:12px">56</span></div></body></html>
